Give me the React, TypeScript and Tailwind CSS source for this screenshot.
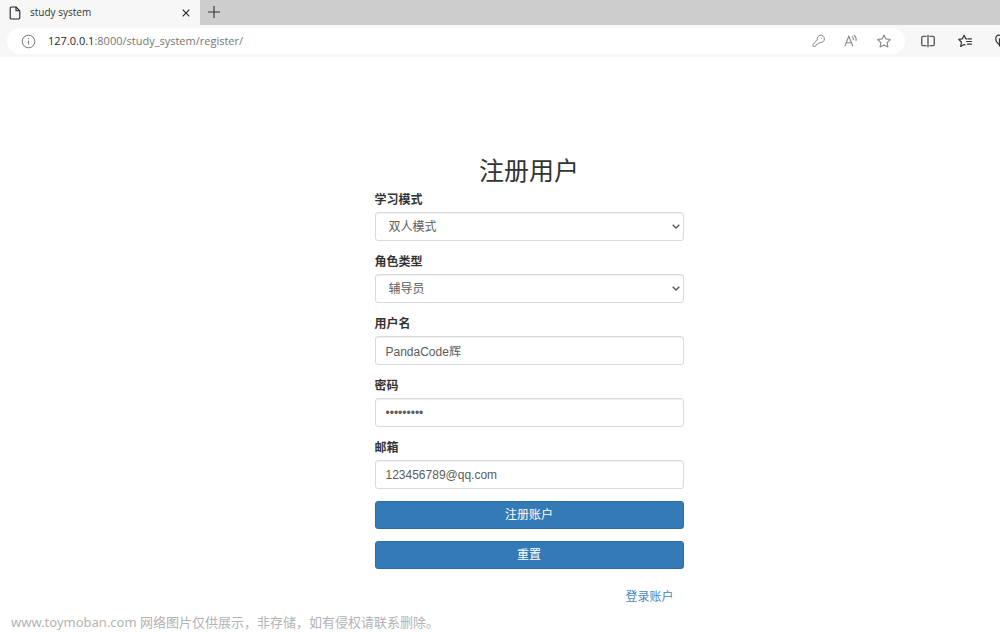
import React from 'react';

const modes = ['双人模式', '单人模式'];
const roles = ['辅导员', '学员'];

const controlClass =
    "block w-full h-[29px] rounded-[3px] border border-[#dadada] bg-white text-xs text-[#5c5c5c] shadow-[inset_0_1px_1px_rgba(0,0,0,0.07)] outline-none";

const buttonClass =
    "block w-full h-7 rounded-[3px] border border-[#2e6da4] bg-[#337ab7] text-xs text-white text-center";

interface FieldProps {
    id: string;
    label: string;
    children: React.ReactNode;
}

const Field: React.FC<FieldProps> = ({ id, label, children }) => (
    <div className="mb-3">
        <label htmlFor={id} className="block mb-0.5 text-xs leading-[19px] font-bold text-[#333333]">
            {label}
        </label>
        {children}
    </div>
);

interface SelectFieldProps {
    id: string;
    label: string;
    options: string[];
}

const SelectField: React.FC<SelectFieldProps> = ({ id, label, options }) => (
    <Field id={id} label={label}>
        <div className="relative">
            <select id={id} className={`${controlClass} appearance-none pl-[13px] pr-6`}>
                {options.map((option) => (
                    <option key={option}>{option}</option>
                ))}
            </select>
            <svg className="absolute right-1 top-2.5 pointer-events-none" width="8" height="8" viewBox="0 0 8 8" fill="none" stroke="#555555" strokeWidth="1.3">
                <path d="M0.7 2.7 4 6 7.3 2.7" />
            </svg>
        </div>
    </Field>
);

const TabBar: React.FC = () => (
    <div className="flex h-[25px] bg-[#cdcdcd]">
        <div className="flex items-center w-[200px] pl-[9px] pr-2 bg-[#f7f7f7]">
            <svg width="12" height="14" viewBox="0 0 12 14" fill="none" stroke="#222222" strokeWidth="1.1" strokeLinejoin="round">
                <path d="M1.2 2.2Q1.2 1 2.4 1H7L10.8 4.8V11.8Q10.8 13 9.6 13H2.4Q1.2 13 1.2 11.8Z" />
                <path d="M7 1V4.8H10.8" />
            </svg>
            <span className="ml-[9px] mb-0.5 flex-1 text-[10px] leading-4 text-[#333333]">study system</span>
            <button type="button" aria-label="Close tab" className="w-3 h-3 flex items-center justify-center">
                <svg width="8" height="8" viewBox="0 0 8 8" stroke="#222222" strokeWidth="1.1">
                    <path d="M0.7 0.7 7.3 7.3M7.3 0.7 0.7 7.3" />
                </svg>
            </button>
        </div>
        <button type="button" aria-label="New tab" className="w-7 pb-0.5 flex items-center justify-center">
            <svg width="12" height="12" viewBox="0 0 12 12" stroke="#333333" strokeWidth="1.1">
                <path d="M6 0V12M0 6H12" />
            </svg>
        </button>
    </div>
);

const AddressBar: React.FC = () => (
    <div className="flex items-center h-8 pl-[7px] bg-[#f7f7f7] overflow-hidden">
        <div className="flex flex-1 items-center h-[26px] pl-[14px] pr-[14px] rounded-full bg-white">
            <svg width="15" height="15" viewBox="0 0 15 15" fill="none" stroke="#777777" strokeWidth="1">
                <circle cx="7.5" cy="7.5" r="6.3" />
                <path d="M7.5 6.6V10.6" />
                <circle cx="7.5" cy="4.6" r="0.3" />
            </svg>
            <span className="ml-3 flex-1 text-[11px] leading-4 text-[#767676]">
                <span className="text-[#1f1f1f]">127.0.0.1</span>:8000/study_system/register/
            </span>
            <div className="flex items-center gap-[19px] text-[#888888]">
                <button type="button" aria-label="Saved passwords">
                    <svg width="13" height="14" viewBox="0 0 13 14" fill="none" stroke="currentColor" strokeWidth="1" strokeLinejoin="round">
                        <path d="M5.3 5.9A3.6 3.6 0 1 1 8.2 8.5L7.3 8.9 6.4 9.1 5.7 10.1 4.5 10.4 4.2 11.5 2.9 12.4 1.1 12.3 1 10.5Z" />
                        <circle cx="9.6" cy="4.3" r="0.5" fill="currentColor" stroke="none" />
                    </svg>
                </button>
                <button type="button" aria-label="Read aloud">
                    <svg width="14" height="14" viewBox="0 0 14 14" fill="none" stroke="currentColor" strokeWidth="1.1" strokeLinecap="round">
                        <path d="M0.9 12 4.8 2.2 8.8 12M2.3 8.7H7.4" />
                        <path d="M8.3 2.5Q9.6 4 9.3 5.7M10.2 1.3Q12.8 3.6 12 6.5" />
                    </svg>
                </button>
                <button type="button" aria-label="Add to favorites">
                    <svg width="14" height="14" viewBox="0 0 14 14" fill="none" stroke="currentColor" strokeWidth="1.1" strokeLinejoin="round">
                        <path d="M7 0.9 8.9 4.9 13.3 5.5 10.1 8.6 10.9 13 7 10.9 3.1 13 3.9 8.6 0.7 5.5 5.1 4.9Z" />
                    </svg>
                </button>
            </div>
        </div>
        <div className="flex items-center gap-[23px] w-[95px] pl-4 text-[#333333]">
            <button type="button" aria-label="Split screen" className="shrink-0">
                <svg width="14" height="14" viewBox="0 0 14 14" fill="none" stroke="currentColor" strokeWidth="1.1">
                    <path d="M5.6 2.2H2.2Q0.8 2.2 0.8 3.6V10.4Q0.8 11.8 2.2 11.8H5.6M8.4 2.2H11.8Q13.2 2.2 13.2 3.6V10.4Q13.2 11.8 11.8 11.8H8.4M7 0.7V13.3" />
                </svg>
            </button>
            <button type="button" aria-label="Favorites" className="shrink-0">
                <svg width="14" height="14" viewBox="0 0 14 14" fill="none" stroke="currentColor" strokeWidth="1.2" strokeLinejoin="round" strokeLinecap="round">
                    <path d="M8.9 4.8H7.8L6.1 1.2 4.4 4.8 0.7 5.3 3.4 8 2.7 12.5 6.1 10.5 7 11" />
                    <path d="M10 4.8H13.4M8.6 7.5H13.4M9.4 10.2H13.4" />
                </svg>
            </button>
            <button type="button" aria-label="Browser essentials" className="shrink-0">
                <svg width="14" height="14" viewBox="0 0 14 14" fill="none" stroke="currentColor" strokeWidth="1.2" strokeLinejoin="round">
                    <path d="M4.5 10.8Q0.8 8.5 0.8 4.6Q0.8 1.2 4 1.2Q6 1.2 7 2.8Q8 1.2 10 1.2Q13.2 1.2 13.2 4.6Q13.2 8.5 9.5 10.8" />
                    <path d="M4.5 12.5V4.8H9.5V12.5" />
                </svg>
            </button>
        </div>
    </div>
);

const RegisterForm: React.FC = () => (
    <form className="w-[309px] mx-auto" onSubmit={(e) => e.preventDefault()}>
        <h1 className="mb-1 text-[25px] leading-8 text-center text-[#333333]">注册用户</h1>
        <SelectField id="mode" label="学习模式" options={modes} />
        <SelectField id="role" label="角色类型" options={roles} />
        <Field id="username" label="用户名">
            <input id="username" type="text" defaultValue="PandaCode辉" className={`${controlClass} px-2.5`} />
        </Field>
        <Field id="password" label="密码">
            <input id="password" type="password" defaultValue="panda1234" className={`${controlClass} px-2.5`} />
        </Field>
        <Field id="email" label="邮箱">
            <input id="email" type="email" defaultValue="123456789@qq.com" className={`${controlClass} px-2.5`} />
        </Field>
        <div className="flex flex-col gap-3">
            <button type="submit" className={buttonClass}>注册账户</button>
            <button type="reset" className={buttonClass}>重置</button>
        </div>
        <div className="mt-5 pr-2.5 text-right text-xs leading-4">
            <a href="#login" className="text-[#4788bf]">登录账户</a>
        </div>
    </form>
);

const App: React.FC = () => {
    return (
        <div className="min-h-screen bg-white font-['Liberation_Sans','Noto_Sans_CJK_SC',sans-serif]">
            <header className="font-['Open_Sans','Noto_Sans_CJK_SC',sans-serif]">
                <TabBar />
                <AddressBar />
            </header>
            {/* The content sits slightly right of the window centre */}
            <main className="pl-[58px] pt-[98px]">
                <RegisterForm />
            </main>
            <footer className="pl-[11px] pt-2 text-[13px] leading-[18px] text-[#b3b3b3] font-['Noto_Sans','Noto_Sans_CJK_SC',sans-serif]">
                www.toymoban.com 网络图片仅供展示，非存储，如有侵权请联系删除。
            </footer>
        </div>
    );
};

export default App;
